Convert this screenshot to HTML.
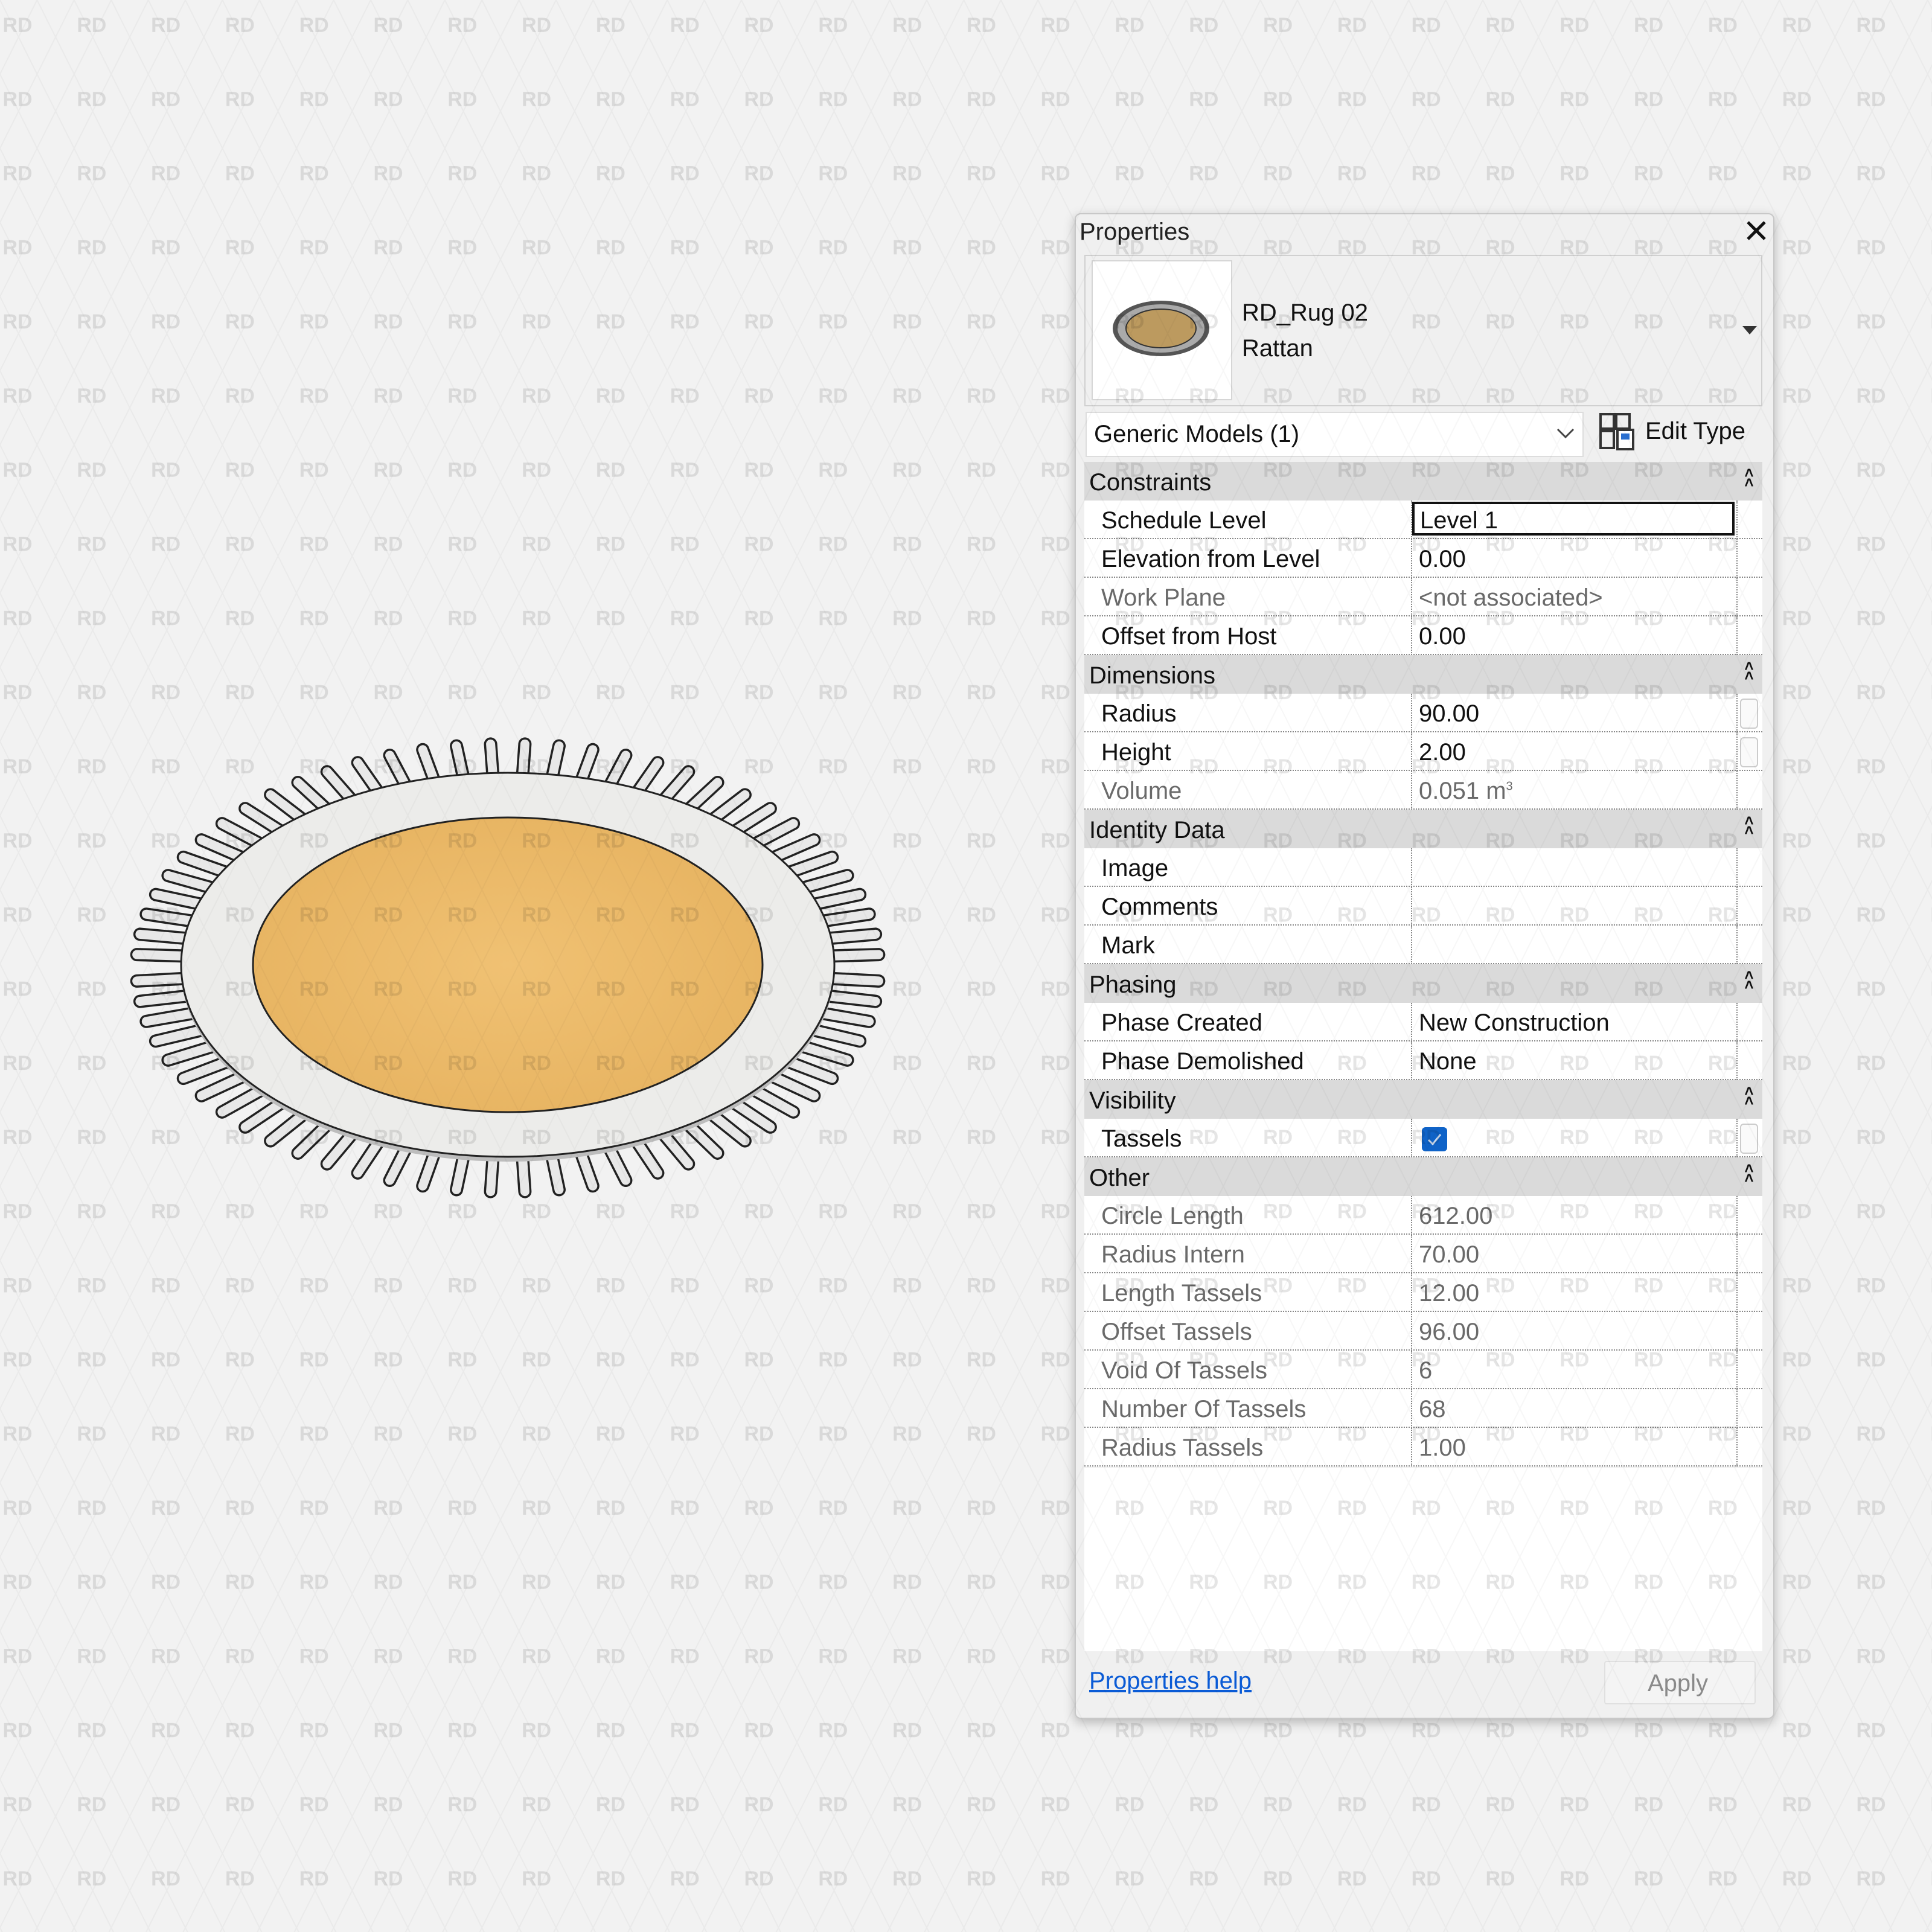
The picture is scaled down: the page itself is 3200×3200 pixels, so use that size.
<!DOCTYPE html>
<html><head><meta charset="utf-8">
<style>
html,body{margin:0;padding:0;}
body{width:3200px;height:3200px;background:#f2f2f2;position:relative;overflow:hidden;font-family:"Liberation Sans",sans-serif;}
.abs{position:absolute;}
#panel{position:absolute;left:1780px;top:353px;width:1159px;height:2494px;background:#f0f0f0;border:2px solid #c8c8c8;border-radius:10px;box-shadow:0 6px 18px rgba(0,0,0,.25);box-sizing:border-box;}
.t{position:absolute;font-size:40px;color:#111;white-space:nowrap;line-height:1;}
.row{position:absolute;left:1796px;width:1123px;height:64px;box-sizing:border-box;}
.hdr{background:#dadada;}
.hdr span{position:absolute;left:8px;top:12px;font-size:40px;color:#111;}
.hdr i{position:absolute;right:12px;top:10px;font-style:normal;font-size:26px;line-height:16px;width:20px;text-align:center;color:#111;font-weight:bold;}
.prop{background:#fff;border-bottom:2px dotted #888;}
.prop .l{position:absolute;left:28px;top:11px;font-size:40px;color:#111;}
.prop .v{position:absolute;left:554px;top:11px;font-size:40px;color:#111;}
.prop .c1{position:absolute;left:541px;top:0;height:64px;border-left:2px dotted #888;}
.prop .c2{position:absolute;left:1080px;top:0;height:64px;border-left:2px dotted #888;}
.g .l,.g .v{color:#6a6a6a;}
.sb{position:absolute;left:1086px;top:8px;width:26px;height:46px;border:2px solid #ccc;border-radius:6px;background:#fafafa;}
</style></head><body>

<svg class="abs" style="left:0;top:0" width="1560" height="2200" viewBox="0 0 1560 2200">
  <defs>
    <radialGradient id="og" cx="50%" cy="50%" r="50%">
      <stop offset="0" stop-color="#f0c173"/><stop offset="1" stop-color="#e8b563"/>
    </radialGradient>
  </defs>
  <g id="tb"></g>
  <ellipse cx="841" cy="1606" rx="541" ry="318" fill="#bdbdbd"/>
  <ellipse cx="841" cy="1598" rx="541" ry="318" fill="#ececea" stroke="#222" stroke-width="3"/>
  <ellipse cx="841" cy="1598" rx="422" ry="244" fill="url(#og)" stroke="#222" stroke-width="3"/>
  <g id="tf"></g>
</svg>

<div id="panel"></div>
<div class="t" style="left:1788px;top:364px;color:#222;">Properties</div>
<svg class="abs" style="left:2891px;top:364px" width="36" height="36"><path d="M4 4L32 32M32 4L4 32" stroke="#111" stroke-width="5"/></svg>

<div class="abs" style="left:1796px;top:422px;width:1123px;height:251px;border:2px solid #d0d0d0;box-sizing:border-box;background:#f0f0f0;"></div>
<div class="abs" style="left:1808px;top:431px;width:233px;height:232px;background:#fff;border:2px solid #d6d6d6;box-sizing:border-box;"></div>
<svg class="abs" style="left:1840px;top:490px" width="170" height="110">
  <ellipse cx="83" cy="54" rx="80" ry="46" fill="#555"/>
  <ellipse cx="83" cy="54" rx="72" ry="40" fill="#aaa"/>
  <ellipse cx="83" cy="54" rx="58" ry="32" fill="#bc9a5f" stroke="#333" stroke-width="2"/>
</svg>
<div class="t" style="left:2057px;top:498px;">RD_Rug 02</div>
<div class="t" style="left:2057px;top:557px;">Rattan</div>
<svg class="abs" style="left:2886px;top:540px" width="24" height="16"><path d="M0 0H24L12 14Z" fill="#333"/></svg>

<div class="abs" style="left:1798px;top:682px;width:825px;height:75px;background:#fff;border:2px solid #ddd;box-sizing:border-box;"></div>
<div class="t" style="left:1812px;top:699px;">Generic Models (1)</div>
<svg class="abs" style="left:2578px;top:708px" width="30" height="20"><path d="M2 3L15 16L28 3" stroke="#444" stroke-width="3" fill="none"/></svg>
<svg class="abs" style="left:2649px;top:684px" width="60" height="62">
  <rect x="2" y="2" width="22" height="24" fill="none" stroke="#333" stroke-width="4"/>
  <rect x="28" y="2" width="22" height="24" fill="none" stroke="#333" stroke-width="4"/>
  <rect x="2" y="30" width="22" height="28" fill="none" stroke="#333" stroke-width="4"/>
  <rect x="30" y="28" width="26" height="32" fill="#fff" stroke="#333" stroke-width="4"/>
  <rect x="36" y="34" width="14" height="10" fill="#2a6fd0"/>
</svg>
<div class="t" style="left:2725px;top:694px;">Edit Type</div>

<div class="row hdr" style="top:765px"><span>Constraints</span><i>˄<br>˄</i></div>
<div class="row prop" style="top:829px"><span class="l">Schedule Level</span><div class="c1"></div><div class="c2"></div><div class="abs" style="left:543px;top:2px;width:534px;height:56px;border:4px solid #111;box-sizing:border-box;"></div><span class="v" style="left:556px">Level 1</span></div>
<div class="row prop" style="top:893px"><span class="l">Elevation from Level</span><div class="c1"></div><div class="c2"></div><span class="v">0.00</span></div>
<div class="row prop g" style="top:957px"><span class="l">Work Plane</span><div class="c1"></div><div class="c2"></div><span class="v">&lt;not associated&gt;</span></div>
<div class="row prop" style="top:1021px"><span class="l">Offset from Host</span><div class="c1"></div><div class="c2"></div><span class="v">0.00</span></div>
<div class="row hdr" style="top:1085px"><span>Dimensions</span><i>˄<br>˄</i></div>
<div class="row prop" style="top:1149px"><span class="l">Radius</span><div class="c1"></div><div class="c2"></div><span class="v">90.00</span><div class="sb"></div></div>
<div class="row prop" style="top:1213px"><span class="l">Height</span><div class="c1"></div><div class="c2"></div><span class="v">2.00</span><div class="sb"></div></div>
<div class="row prop g" style="top:1277px"><span class="l">Volume</span><div class="c1"></div><div class="c2"></div><span class="v">0.051 m<sup style="font-size:20px">3</sup></span></div>
<div class="row hdr" style="top:1341px"><span>Identity Data</span><i>˄<br>˄</i></div>
<div class="row prop" style="top:1405px"><span class="l">Image</span><div class="c1"></div><div class="c2"></div></div>
<div class="row prop" style="top:1469px"><span class="l">Comments</span><div class="c1"></div><div class="c2"></div></div>
<div class="row prop" style="top:1533px"><span class="l">Mark</span><div class="c1"></div><div class="c2"></div></div>
<div class="row hdr" style="top:1597px"><span>Phasing</span><i>˄<br>˄</i></div>
<div class="row prop" style="top:1661px"><span class="l">Phase Created</span><div class="c1"></div><div class="c2"></div><span class="v">New Construction</span></div>
<div class="row prop" style="top:1725px"><span class="l">Phase Demolished</span><div class="c1"></div><div class="c2"></div><span class="v">None</span></div>
<div class="row hdr" style="top:1789px"><span>Visibility</span><i>˄<br>˄</i></div>
<div class="row prop" style="top:1853px"><span class="l">Tassels</span><div class="c1"></div><div class="c2"></div><div class="abs" style="left:559px;top:14px;width:42px;height:40px;background:#0f63c8;border-radius:6px;"><svg width="42" height="40"><path d="M11 21L18 28L31 12" stroke="#cfe0f6" stroke-width="3" fill="none"/></svg></div><div class="sb"></div></div>
<div class="row hdr" style="top:1917px"><span>Other</span><i>˄<br>˄</i></div>
<div class="row prop g" style="top:1981px"><span class="l">Circle Length</span><div class="c1"></div><div class="c2"></div><span class="v">612.00</span></div>
<div class="row prop g" style="top:2045px"><span class="l">Radius Intern</span><div class="c1"></div><div class="c2"></div><span class="v">70.00</span></div>
<div class="row prop g" style="top:2109px"><span class="l">Length Tassels</span><div class="c1"></div><div class="c2"></div><span class="v">12.00</span></div>
<div class="row prop g" style="top:2173px"><span class="l">Offset Tassels</span><div class="c1"></div><div class="c2"></div><span class="v">96.00</span></div>
<div class="row prop g" style="top:2237px"><span class="l">Void Of Tassels</span><div class="c1"></div><div class="c2"></div><span class="v">6</span></div>
<div class="row prop g" style="top:2301px"><span class="l">Number Of Tassels</span><div class="c1"></div><div class="c2"></div><span class="v">68</span></div>
<div class="row prop g" style="top:2365px"><span class="l">Radius Tassels</span><div class="c1"></div><div class="c2"></div><span class="v">1.00</span></div>
<div class="abs" style="left:1796px;top:2431px;width:1123px;height:304px;background:#fff;"></div>

<div class="t" style="left:1804px;top:2764px;color:#0a5bd6;text-decoration:underline;">Properties help</div>
<div class="abs" style="left:2657px;top:2751px;width:251px;height:72px;background:#f4f4f4;border:2px solid #e0e0e0;box-sizing:border-box;border-radius:4px;"></div>
<div class="t" style="left:2729px;top:2768px;color:#8a8a8a;">Apply</div>

<svg class="abs" style="left:0;top:0;pointer-events:none" width="3200" height="3200">
  <defs>
    <pattern id="wm" width="122.8" height="122.8" patternUnits="userSpaceOnUse" x="0" y="0">
      <path d="M0 0L61.4 122.8M61.4 0L122.8 122.8M61.4 0L0 122.8M122.8 0L61.4 122.8" stroke="#000" stroke-opacity="0.03" stroke-width="2"/>
      <text x="29" y="53" font-family="Liberation Sans,sans-serif" font-size="34" font-weight="bold" fill="#000" fill-opacity="0.1" text-anchor="middle">RD</text>
    </pattern>
  </defs>
  <rect width="3200" height="3200" fill="url(#wm)"/>
</svg>

<script>
(function(){
  var ns="http://www.w3.org/2000/svg",tb=document.getElementById('tb'),tf=document.getElementById('tf');
  var cx=841,cy=1598,N=68;
  for(var k=0;k<N;k++){
    var a=(k+0.5)/N*2*Math.PI;
    var c=Math.cos(a),s=Math.sin(a);
    var x1=cx+530*c,y1=cy+312*s+(s>0?8:0),x2=cx+615*c,y2=cy+366*s+(s>0?10:0);
    var g=(s<-0.3)?tb:tf;
    var l1=document.createElementNS(ns,'line');
    l1.setAttribute('x1',x1);l1.setAttribute('y1',y1);l1.setAttribute('x2',x2);l1.setAttribute('y2',y2);
    l1.setAttribute('stroke','#222');l1.setAttribute('stroke-width','22');l1.setAttribute('stroke-linecap','round');
    var l2=l1.cloneNode();l2.setAttribute('stroke','#e8e8e8');l2.setAttribute('stroke-width','15');
    g.appendChild(l1);g.appendChild(l2);
  }
  var svg=tb.parentNode;svg.insertBefore(tf,tb.nextSibling);
})();
</script>
</body></html>
